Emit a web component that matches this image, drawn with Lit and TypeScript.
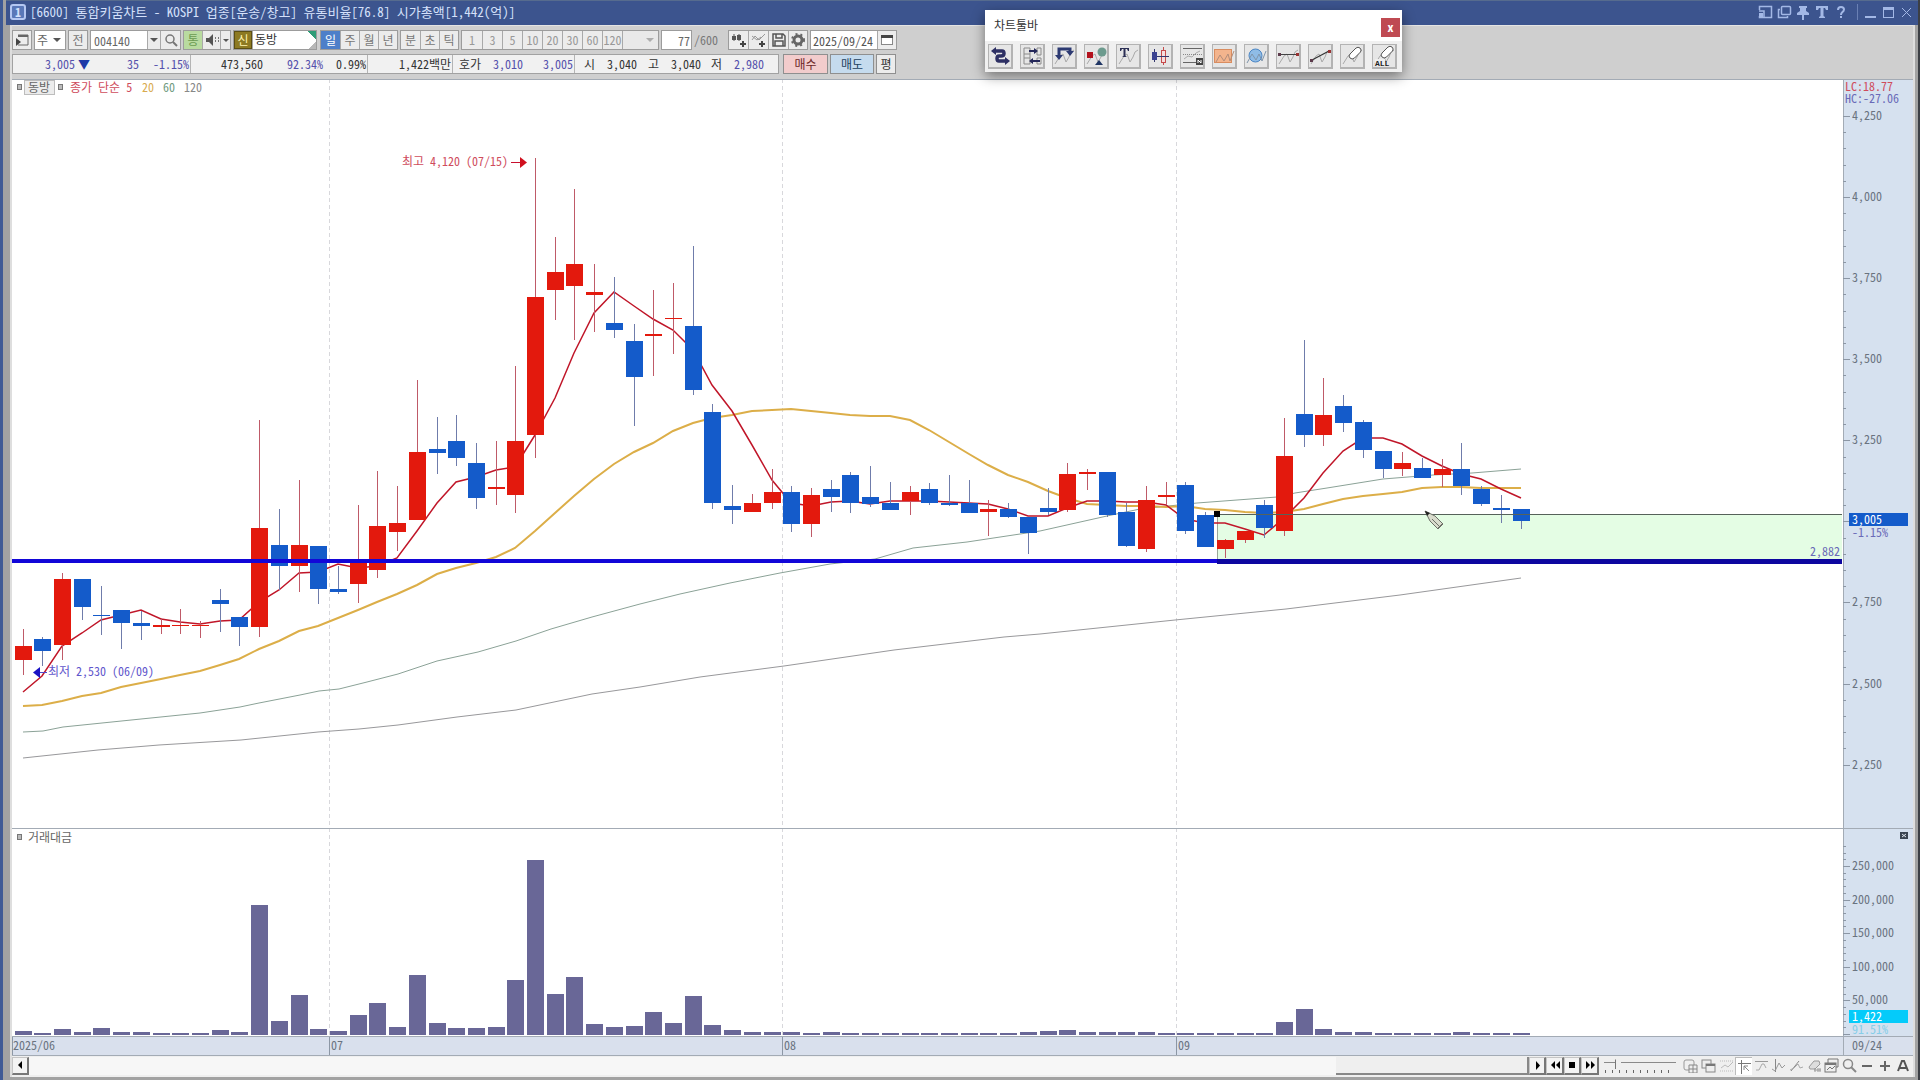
import { LitElement, html, svg, css, nothing } from "lit";
import { customElement, property } from "lit/decorators.js";

/* ---------- chart data (chart-space units, y grows downwards) ---------- */

type Candle = [kind: "u" | "d", top: number, bottom: number, high: number, low: number];

const X0 = 22.6;
const STEP = 19.71;
const BODY = 17;
const cx = (i: number) => Math.round(X0 + i * STEP);

const CANDLES: Candle[] = [
  ["u", 646, 660, 629, 675], ["d", 639, 651, 637, 666], ["u", 579, 645, 573, 660], ["d", 579, 607, 579, 620],
  ["d", 615, 615, 586, 635], ["d", 610, 623, 610, 649], ["d", 623, 626, 611, 640], ["u", 625, 627, 618, 634],
  ["u", 625, 625, 609, 634], ["u", 625, 625, 621, 638], ["d", 600, 604, 589, 632], ["d", 617, 627, 617, 646],
  ["u", 528, 627, 420, 637], ["d", 545, 566, 509, 590], ["u", 545, 566, 480, 592], ["d", 546, 589, 546, 604],
  ["d", 589, 592, 566, 594], ["u", 562, 584, 505, 603], ["u", 526, 570, 471, 578], ["u", 523, 532, 486, 551],
  ["u", 452, 520, 380, 520], ["d", 449, 453, 417, 474], ["d", 441, 458, 415, 466], ["d", 463, 498, 443, 509],
  ["u", 487, 489, 441, 505], ["u", 441, 495, 366, 513], ["u", 297, 435, 158, 458], ["u", 272, 290, 237, 320],
  ["u", 264, 286, 189, 340], ["u", 292, 295, 264, 332], ["d", 323, 330, 277, 338], ["d", 341, 377, 324, 426],
  ["u", 334, 336, 290, 376], ["u", 318, 318, 283, 354], ["d", 326, 390, 246, 395], ["d", 412, 503, 404, 509],
  ["d", 506, 510, 485, 524], ["u", 503, 512, 494, 512], ["u", 492, 503, 469, 509], ["d", 492, 524, 486, 532],
  ["u", 495, 524, 488, 537], ["d", 489, 497, 480, 512], ["d", 475, 503, 472, 513], ["d", 497, 504, 466, 507],
  ["d", 503, 510, 482, 510], ["u", 492, 501, 486, 515], ["d", 489, 503, 483, 505], ["d", 503, 505, 475, 506],
  ["d", 503, 513, 480, 513], ["u", 509, 512, 500, 536], ["d", 509, 517, 503, 518], ["d", 517, 533, 517, 554],
  ["d", 508, 512, 488, 515], ["u", 474, 510, 463, 512], ["u", 472, 474, 469, 490], ["d", 472, 515, 472, 517],
  ["d", 512, 546, 503, 547], ["u", 500, 549, 486, 552], ["u", 495, 497, 482, 505], ["d", 485, 531, 482, 534],
  ["d", 515, 547, 512, 547], ["u", 540, 549, 539, 558], ["u", 531, 540, 531, 543], ["d", 505, 528, 500, 538],
  ["u", 456, 531, 418, 536], ["d", 414, 435, 340, 447], ["u", 415, 435, 378, 446], ["d", 406, 423, 395, 432],
  ["d", 422, 450, 420, 458], ["d", 451, 469, 451, 478], ["u", 463, 469, 452, 476], ["d", 468, 478, 458, 478],
  ["u", 469, 475, 459, 487], ["d", 469, 486, 443, 495], ["d", 489, 504, 486, 506], ["d", 508, 510, 495, 523],
  ["d", 509, 521, 509, 529],
];

const MA5 = [
  692, 676, 646, 633, 620, 615, 610, 619, 622, 624, 621, 620, 602, 590, 573, 572, 564, 568, 566, 558, 531, 503, 482,
  477, 470, 467, 435, 398, 353, 313, 292, 306, 319, 330, 350, 385, 411, 445, 480, 503, 506, 502, 501, 504, 501, 501,
  501, 502, 503, 504, 509, 516, 516, 508, 501, 501, 502, 502, 505, 519, 523, 523, 529, 535, 518, 498, 473, 451, 438,
  438, 444, 456, 466, 474, 479, 489, 498,
];

const MA20 = [
  706, 705, 701, 696, 693, 687, 683, 679, 675, 671, 665, 659, 649, 641, 631, 626, 618, 610, 602, 594, 585, 574, 568,
  563, 557, 548, 531, 513, 496, 479, 464, 452, 443, 431, 423, 418, 415, 411, 410, 409, 411, 413, 415, 416, 416, 420,
  430, 442, 454, 465, 475, 482, 491, 498, 504, 505, 506, 506, 507, 506, 509, 510, 512, 513, 512, 509, 504, 499, 496,
  494, 492, 488, 487, 487, 488, 488, 488,
];

const MA60: [number, number][] = [
  [23, 732], [43, 731], [63, 727], [102, 723], [141, 719], [200, 713], [240, 707], [259, 703], [300, 695], [319, 691],
  [339, 689], [367, 682], [398, 674], [437, 661], [478, 652], [516, 641], [551, 629], [592, 617], [640, 604],
  [680, 594], [730, 583], [780, 573], [830, 564], [875, 559], [913, 548], [967, 542], [1040, 531], [1107, 516],
  [1140, 509], [1197, 503], [1277, 497], [1295, 493], [1327, 488], [1383, 479], [1433, 475], [1472, 473], [1521, 469],
];

const MA120: [number, number][] = [
  [23, 758], [98, 750], [159, 745], [241, 740], [318, 732], [359, 729], [398, 725], [457, 717], [516, 710], [592, 694],
  [640, 687], [700, 677], [784, 666], [894, 650], [1004, 637], [1040, 634], [1175, 620], [1286, 609], [1400, 595],
  [1521, 578],
];

const TRADES = [
  1031, 1033, 1029, 1032, 1028, 1032, 1032, 1033, 1033, 1033, 1030, 1032, 905, 1021, 995, 1029, 1031, 1015, 1003, 1027,
  975, 1023, 1028, 1028, 1027, 980, 860, 994, 977, 1024, 1027, 1026, 1012, 1023, 996, 1025, 1030, 1032, 1032, 1032,
  1033, 1032, 1033, 1033, 1033, 1033, 1033, 1033, 1033, 1033, 1033, 1032, 1031, 1030, 1032, 1032, 1032, 1032, 1033,
  1033, 1033, 1033, 1033, 1033, 1022, 1009, 1029, 1032, 1032, 1033, 1033, 1033, 1033, 1032, 1033, 1033, 1033,
];

const MONTHS: [number, string][] = [[11, "2025/06"], [329, "07"], [782, "08"], [1176, "09"]];
const AXIS_X = 1843;
const priceY = (p: number) => Math.round(116 + (4250 - p) * 0.3243);
const line = (pts: [number, number][]) => pts.map((p) => p.join(",")).join(" ");
const series = (ys: number[]): [number, number][] => ys.map((y, i) => [cx(i), y]);

/* ---------- icons ---------- */

const ghost = svg`<path d="M3 20 L8 12 L11 10 L14 18 L17 13 L19 8 L22 6" fill="none" stroke="#a9a9a9"/>`;

const TOOLS: [string, unknown][] = [
  ["차트 전환", svg`<path d="M7 7 H14 Q16 7 16 9.500 Q16 12 13 12 H11 Q9 12 9 14.500 Q9 17 11 17 H18" fill="none" stroke="#2d2f63" stroke-width="3.500"/><path d="M8 3 L3 7 L8 11z M17 13 L22 17 L17 21z" fill="#2d2f63"/>`],
  ["비교", svg`<path d="M4 4 H10 V20 H4z M4 10 H10 M4 14 H10 M17 4 H21 V11 H17z M17 14 H21 V20 H17z" fill="none" stroke="#8b8b8b"/><path d="M9 7 H16 M20 17 H12" stroke="#25285a" stroke-width="2"/><path d="M14 4 L18 7 L14 10z M13 14 L9 17 L13 20z" fill="#25285a"/>`],
  ["되돌리기", svg`${ghost}<path d="M7 13 V5 H18 V8" fill="none" stroke="#2d3a72" stroke-width="3"/><path d="M3 11 H11 L7 16z M14 7 H22 L18 12z" fill="#2d3a72"/>`],
  ["도형", svg`${ghost}<rect x="3" y="8" width="6" height="6" fill="#b3121d"/><circle cx="18" cy="8" r="4.500" fill="#6d9b8e"/><path d="M11 21 L15 16 L19 21z" fill="#1f3564"/>`],
  ["문자", svg`${ghost}<path d="M4 4 H13 V7 H12 L11 5 H9.500 V12 L11 13 H6 L7.500 12 V5 H6 L5 7 H4z" fill="#2b2f55"/>`],
  ["봉", svg`<path d="M6.500 5 V18 M15.500 3 V21" stroke="#33386e"/><path d="M15.500 3 V21" stroke="#c54b4b"/><rect x="4" y="8" width="5" height="8" fill="#3a4290"/><rect x="13.500" y="6.500" width="4" height="12" fill="#f6dede" stroke="#c54b4b"/><path d="M9 12.500 H21" stroke="#33386e"/>`],
  ["수평선", svg`<path d="M3 4.500 H22 M3 18.500 H16" stroke="#666"/><path d="M3 10.500 H22" stroke="#888" stroke-dasharray="1 1"/><path d="M4 15 L8 12 L12 13 L16 9 L20 7" fill="none" stroke="#aaa"/><rect x="16" y="14" width="7" height="7" fill="#444"/><path d="M18 19 V16 L21 19 V16" fill="none" stroke="#fff"/>`],
  ["사각형", svg`<rect x="2.500" y="5.500" width="17" height="13" fill="#f3b48d" stroke="#d98d60"/><path d="M4 18 L8 11 L12 17 L16 10 L18 17 L22 7" fill="none" stroke="#b18d7b"/>`],
  ["원", svg`<circle cx="11.500" cy="11.500" r="6.500" fill="#8fbce6" stroke="#4c86c4"/><path d="M3 19 L8 10 L12 16 L15 10 L18 17 L22 7" fill="none" stroke="#7f95ab"/>`],
  ["수평 추세선", svg`${ghost}<path d="M3 10.500 H22" stroke="#444"/><rect x="2" y="9" width="3" height="3" fill="#5d3b4b"/><rect x="20" y="9" width="3" height="3" fill="#933"/>`],
  ["추세선", svg`${ghost}<path d="M4 16 L21 7" stroke="#333" stroke-width="1.200"/><rect x="2" y="15" width="3" height="3" fill="#5d3b4b"/><rect x="20" y="6" width="3" height="3" fill="#933"/>`],
  ["지우기", svg`${ghost}<path d="M10 10 L16 4 Q18 2.500 20 4 Q22 6 20.500 8 L14.500 14 Q12 16 10 14 Q8 12 10 10z" fill="#fff" stroke="#555"/>`],
  ["모두 지우기", svg`${ghost}<path d="M10 9 L16 3 Q18 1.500 20 3 Q22 5 20.500 7 L14.500 13 Q12 15 10 13 Q8 11 10 9z" fill="#fff" stroke="#555"/><rect x="3" y="15" width="10" height="7" fill="#eee"/><text x="3" y="22" font-size="8" font-weight="bold" fill="#222" font-family="Liberation Mono, monospace">ALL</text>`],
];

const FOOT_ICONS: [string, unknown][] = [
  ["창 추가", svg`<rect x="1" y="2" width="10" height="10" rx="2" fill="none" stroke="#999"/><path d="M6 7 H14 V15 H6z M6 11 H14 M10 7 V15" fill="#eee" stroke="#888"/>`],
  ["창 겹치기", svg`<rect x="1" y="2" width="9" height="8" fill="#eee" stroke="#888"/><rect x="5" y="6" width="9" height="8" fill="#eee" stroke="#888"/><path d="M5 7 H14" stroke="#777" stroke-width="2"/>`],
  ["구간", svg`<path d="M1 3 H14 M1 13 H14" stroke="#bbb" stroke-dasharray="1 1"/><path d="M2 10 L6 7 L9 9 L14 4" fill="none" stroke="#bbb"/>`],
  ["커서", svg`<path d="M1 4.500 H14 M4.500 1 V15" stroke="#777"/><path d="M7 7 L12 12 M7 7 V11 M7 7 H11" stroke="#888"/>`],
  ["수평선", svg`<path d="M1 3.500 H14" stroke="#999"/><path d="M2 12 L5 12 L8 6 L10 6 L12 10" fill="none" stroke="#aaa"/>`],
  ["수직선", svg`<path d="M4.500 1 V14" stroke="#888"/><path d="M1 11 L4 13 L8 5 L11 10 L14 7" fill="none" stroke="#999"/>`],
  ["추세선", svg`<path d="M2 13 L10 3" stroke="#888"/><path d="M1 12 L5 10 L9 6 L11 10 L14 9" fill="none" stroke="#aaa"/>`],
  ["모두 지우기", svg`<path d="M2 9 L7 3 H12 L13 6 L8 11 H3z" fill="#ddd" stroke="#999"/><path d="M7 12 H14 M8 10 V14 M11 10 V14 M13 10 V14" stroke="#999"/>`],
  ["차트 겹치기", svg`<path d="M4 5 V1 H14 V9 H12" fill="none" stroke="#777"/><rect x="1" y="5" width="11" height="9" fill="#eee" stroke="#777"/><path d="M1 6 H12" stroke="#777" stroke-width="2"/><path d="M3 12 L6 9 L8 11 L11 8" fill="none" stroke="#777"/>`],
  ["확대경", svg`<circle cx="6" cy="6" r="4.500" fill="none" stroke="#888" stroke-width="1.500"/><path d="M9 9 L14 14" stroke="#888" stroke-width="2"/>`],
  ["축소", svg`<path d="M3 8 H13" stroke="#666" stroke-width="2"/>`],
  ["확대", svg`<path d="M3 8 H13 M8 3 V13" stroke="#666" stroke-width="2"/>`],
  ["자동", svg`<path d="M3 13 L7 3 H9 L13 13 M5 10 H11" fill="none" stroke="#555" stroke-width="2"/>`],
];

const TITLE_ICONS: [string, unknown][] = [
  ["창 분리", svg`<path d="M1.500 5 V1.500 H13.500 V12.500 H1.500 V11" fill="none" stroke="currentColor" stroke-width="1.500"/><path d="M1 6 H6 V12" fill="none" stroke="currentColor" stroke-width="1.500"/><rect x="1" y="8" width="4" height="5" fill="currentColor"/>`],
  ["창 복제", svg`<rect x="4.500" y="1.500" width="9" height="8" rx="1" fill="none" stroke="currentColor" stroke-width="1.500"/><path d="M3 4.500 H1.500 V12.500 H10.500 V11" fill="none" stroke="currentColor" stroke-width="1.500"/>`],
  ["고정", svg`<path d="M3 1 H11 V3 H10 V6 L13 8 V10 H1 V8 L4 6 V3 H3z M6 10 H8 V15 H6z" fill="currentColor"/>`],
  ["글자", svg`<path d="M1 1 H13 V5 H11 L10 3 H8.500 V11 L10 12 V13 H4 V12 L5.500 11 V3 H4 L3 5 H1z" fill="currentColor"/>`],
  ["도움말", svg`<path d="M4 5 Q4 2 7 2 Q10 2 10 4.500 Q10 6 8 7.500 Q7 8.500 7 10" fill="none" stroke="currentColor" stroke-width="2"/><rect x="6" y="11" width="2" height="2" fill="currentColor"/>`],
];
const WINDOW_ICONS: [string, unknown][] = [
  ["최소화", svg`<path d="M2 12 H13" stroke="currentColor" stroke-width="2"/>`],
  ["최대화", svg`<rect x="2.500" y="3.500" width="10" height="9" fill="none" stroke="currentColor"/><path d="M2 3.500 H13" stroke="currentColor" stroke-width="3"/>`],
  ["닫기", svg`<path d="M3 3 L12 12 M12 3 L3 12" stroke="currentColor"/>`],
];

const icon = (body: unknown, box = 16) =>
  html`<svg class="icon" width=${box} height=${box} viewBox="0 0 ${box} ${box}" aria-hidden="true">${body}</svg>`;
const arrow = svg`<path d="M4 6 H12 L8 10z" fill="#555"/>`;

const shared = css`
  :host { font-family: "Noto Sans Mono CJK KR", "Noto Sans CJK KR", "Liberation Sans", sans-serif; font-size: 12px; line-height: 16px; color: #333; }
  * { box-sizing: border-box; }
  button, input, select { font: inherit; color: inherit; margin: 0; padding: 0; border-radius: 0; }
  button { display: flex; align-items: center; justify-content: center; }
  .icon { display: block; flex: none; }
`;

/* ---------- title bar ---------- */

@customElement("title-bar")
class TitleBar extends LitElement {
  static styles = [shared, css`
    :host { display: block; }
    .bar { display: flex; align-items: center; height: 25px; padding: 0 4px 2px 4px; background: #3c548e; border-top: 1px solid #566b8e; color: #d5e1fb; }
    .badge { width: 16px; height: 16px; margin-right: 4px; border: 2px solid #b5c8f2; border-radius: 3px; background: #5a78b8; font-weight: 700; line-height: 11px; text-align: center; }
    .title { flex: 1; margin: 0; font-size: 13px; font-weight: 500; white-space: pre; }
    .group { display: flex; gap: 4px; color: #a3b8e6; }
    .group + .group { gap: 3px; margin-left: 8px; padding-left: 5px; border-left: 1px solid #6a80b4; }
    .group button { width: 15px; height: 16px; border: 0; background: none; }
  `];
  render() {
    const group = (items: [string, unknown][]) => html`<div class="group">
      ${items.map(([label, body]) => html`<button aria-label=${label}>${icon(body, 15)}</button>`)}
    </div>`;
    return html`<header class="bar">
      <span class="badge">1</span>
      <h1 class="title">[6600] 통합키움차트 - KOSPI 업종[운송/창고] 유통비율[76.8] 시가총액[1,442(억)]</h1>
      ${group(TITLE_ICONS)}${group(WINDOW_ICONS)}
    </header>`;
  }
}

/* ---------- toolbars ---------- */

@customElement("chart-toolbar")
class ChartToolbar extends LitElement {
  static styles = [shared, css`
    :host { display: block; }
    .row { display: flex; align-items: center; height: 20px; }
    .group { display: flex; height: 20px; margin-right: 2px; border: 1px solid #9c9c9c; background: #fff; }
    .group > * { height: 18px; border: 0; background: #ececec; }
    .group > * + * { border-left: 1px solid #a9a9a9; }
    .group input, .group .name { padding: 0 3px; background: #fff; }
    .sq { width: 18px; overflow: hidden; }
    .sq.mid { width: 19px; }
    .sq.big { width: 20px; }
    .tf { width: 19px; padding: 0 1px; overflow: hidden; }
    .tf.num { width: 20px; }
    .arrow { width: 13px; overflow: hidden; }
    .arrow.slim { width: 10px; }
    .pick { position: relative; width: 30px; }
    .pick select { width: 100%; height: 18px; padding: 0 2px; border: 0; background: #fff; appearance: none; color: #666; }
    .pick .icon { position: absolute; right: 0; top: 1px; pointer-events: none; }
    .pick.wide { width: 36px; }
    .pick.wide select { background: #e9e9e9; }
    .pick.wide .icon { opacity: 0.4; }
    .muted { color: #777; }
    .dim { color: #999; }
    .code { width: 56px; color: #666; }
    .group .green { background: #b9dba0; color: #6b9a51; }
    .group .olive { background: #8d7a22; color: #fff3b0; border: 1px solid #5c4f14; }
    .group .name { width: 64px; padding: 0 2px; background: linear-gradient(225deg, #2e9c77 6px, transparent 6px), linear-gradient(315deg, #b8b8b8 5px, #fff 5px); }
    .group .on { background: #4d7fc9; color: #fff; }
    .gap { margin-right: 3px; }
    .group .count { width: 29px; padding: 0 1px; text-align: right; color: #666; }
    .total { margin: 0 10px 0 0; color: #777; }
    .group .date { width: 66px; padding: 0 2px; color: #555; }
    .quotes { margin-top: 4px; }
    .quote { display: flex; align-items: center; height: 20px; margin: 0 4px 0 0; border: 1px solid #a2a2a2; background: #f1f1f1; white-space: nowrap; }
    .cell { height: 18px; line-height: 18px; text-align: right; }
    .cell.end { border-right: 1px solid #b4b4b4; padding-right: 1px; }
    .down { color: #5450ac; }
    .tri { color: #1d3aa8; }
    .trade { height: 20px; margin-right: 2px; border: 1px solid #8f8f8f; background: #ececec; }
    .buy { width: 45px; background: #f2cccc; color: #6b2626; }
    .sell { width: 44px; background: #c5dbee; color: #22415f; }
    .avg { width: 20px; }
  `];
  render() {
    const c = (text: string, width: number, cls = "") => html`<span class="cell ${cls}" style="width:${width}px">${text}</span>`;
    return html`
      <div class="row">
        <div class="group"><button class="sq" aria-label="메뉴">${icon(svg`<path d="M4 3 H14 V13 H4" fill="none" stroke="#666"/><path d="M4 4 H14" stroke="#666" stroke-width="2"/><path d="M2 6 L7 10 L2 14z" fill="#444"/>`)}</button></div>
        <div class="group"><label class="pick"><select aria-label="종목 구분"><option>주</option></select>${icon(arrow)}</label></div>
        <div class="group"><button class="sq muted">전</button></div>
        <div class="group">
          <input class="code" aria-label="종목 코드" .value=${"004140"} />
          <button class="arrow" aria-label="코드 목록">${icon(arrow)}</button>
          <button class="sq big" aria-label="종목 검색">${icon(svg`<circle cx="7" cy="7" r="4" fill="none" stroke="#777" stroke-width="1.500"/><path d="M10 10 L14 14" stroke="#777" stroke-width="2"/>`)}</button>
        </div>
        <div class="group">
          <button class="sq green">통</button>
          <button class="sq" aria-label="소리">${icon(svg`<path d="M2 6 H5 L9 2 V14 L5 10 H2z" fill="#555"/><path d="M11.500 5 V11 M14.500 5 V11" stroke="#777" stroke-dasharray="2 1"/>`)}</button>
          <button class="arrow slim" aria-label="소리 설정">${icon(svg`<path d="M5 7 H11 L8 10z" fill="#555"/>`)}</button>
        </div>
        <div class="group gap"><button class="sq olive">신</button><span class="name">동방</span></div>
        <div class="group">${["일", "주", "월", "년"].map((t, i) => html`<button class="tf ${i ? "muted" : "on"}">${t}</button>`)}</div>
        <div class="group">${["분", "초", "틱"].map((t) => html`<button class="tf muted">${t}</button>`)}</div>
        <div class="group">
          ${["1", "3", "5", "10", "20", "30", "60", "120"].map((t) => html`<button class="tf num dim">${t}</button>`)}
          <label class="pick wide"><select aria-label="주기"><option></option></select>${icon(arrow)}</label>
        </div>
        <div class="group"><input class="count" aria-label="봉 개수" .value=${"77"} /></div>
        <span class="total">/600</span>
        <div class="group">
          <button class="sq mid" aria-label="봉 추가">${icon(svg`<path d="M3 2 V9 M8 2 V9" stroke="#555" stroke-width="1"/><path d="M1 4 H5 V8 H1z M6 3 H10 V8 H6z" fill="#555"/><path d="M9 12 H15 M12 9 V15" stroke="#444" stroke-width="2"/>`)}</button>
          <button class="sq big" aria-label="지표 추가">${icon(svg`<path d="M1 8 L4 4 L8 8 L14 2 M1 4 L6 8 L10 5" fill="none" stroke="#999"/><path d="M8 12 H14 M11 9 V15" stroke="#444" stroke-width="2"/>`)}</button>
          <button class="sq big" aria-label="저장">${icon(svg`<path d="M2 2 H12 L14 4 V14 H2z M5 2 V6 H11 V2 M4 14 V9 H12 V14" fill="none" stroke="#555" stroke-width="1.500"/>`)}</button>
          <button class="sq mid" aria-label="설정">${icon(svg`<circle cx="8" cy="8" r="4" fill="none" stroke="#666" stroke-width="3"/><circle cx="8" cy="8" r="6" fill="none" stroke="#666" stroke-width="2" stroke-dasharray="2 3"/>`)}</button>
        </div>
        <div class="group">
          <input class="date" aria-label="날짜" .value=${"2025/09/24"} />
          <button class="sq mid" aria-label="달력">${icon(svg`<rect x="2.500" y="3.500" width="11" height="9" fill="#fff" stroke="#888"/><path d="M2 4.500 H14" stroke="#444" stroke-width="3"/>`)}</button>
        </div>
      </div>
      <div class="row quotes">
        <p class="quote">
          ${c("3,005", 62, "down")}${c("▼", 15, "tri")}${c("35", 49, "down")}${c("-1.15%", 52, "down end")}
          ${c("473,560", 72)}${c("92.34%", 60, "down")}${c("0.99%", 45, "end")}${c("1,422백만", 85, "end")}
          ${c("호가", 28)}${c("3,010", 42, "down")}${c("3,005", 52, "down end")}${c("시", 20)}${c("3,040", 42)}
          ${c("고", 22)}${c("3,040", 42)}${c("저", 21)}${c("2,980", 42, "down")}${c("", 14)}
        </p>
        <button class="trade buy">매수</button><button class="trade sell">매도</button><button class="trade avg">평</button>
      </div>`;
  }
}

/* ---------- floating tool palette ---------- */

@customElement("tool-palette")
class ToolPalette extends LitElement {
  static styles = [shared, css`
    :host { display: block; }
    .box { background: #f0f0f0; box-shadow: 0 4px 12px rgba(0, 0, 0, 0.45); }
    .head { display: flex; align-items: center; justify-content: space-between; height: 31px; padding: 3px 2px 0 9px; background: #fff; }
    .head h2 { margin: 0 0 5px; font-family: "Noto Sans CJK KR", sans-serif; font-size: 12px; font-weight: 400; }
    .close { width: 19px; height: 19px; border: 0; background: #bf4a52; color: #fff; font-weight: 700; }
    .tools { display: flex; gap: 7px; padding: 3px 5px 3px 3px; }
    .tools button { width: 25px; height: 25px; border: 1px solid #b3b3b3; border-width: 1px 2px 2px 1px; background: #e6e6e6; }
  `];
  render() {
    return html`<section class="box" aria-label="차트툴바">
      <div class="head"><h2>차트툴바</h2><button class="close" aria-label="닫기">x</button></div>
      <div class="tools">${TOOLS.map(([label, body]) => html`<button aria-label=${label}>${icon(body, 24)}</button>`)}</div>
    </section>`;
  }
}

/* ---------- price / volume panels ---------- */

const chartStyles = css`
  :host { display: block; }
  .plot { display: block; width: 100%; height: auto; overflow: visible; background: #fff; }
  text { font-family: "Noto Sans Mono CJK KR", "Noto Sans CJK KR", sans-serif; font-size: 12px; fill: #6a7380; }
  .axis { fill: #d6e1ef; }
  .tick { stroke: #8c97a5; }
  .edge { stroke: #a3abb5; }
  .grid { stroke: #d8d8dc; stroke-dasharray: 4 3; }
  .u { fill: #e3190d; }
  .d { fill: #145bca; }
  .wu { stroke: #bf5a68; }
  .wd { stroke: #6f7cab; }
  .ma5 { fill: none; stroke: #c01629; stroke-width: 1.500; }
  .ma20 { fill: none; stroke: #dcae48; stroke-width: 2; }
  .ma60 { fill: none; stroke: #8ba297; }
  .ma120 { fill: none; stroke: #98989b; }
  .red { fill: #cf4c5c; }
  .blue { fill: #5f56cc; }
  .violet { fill: #6a6ab8; }
  .gold { fill: #d9ab50; }
  .sage { fill: #6f9a80; }
  .gray { fill: #888; }
  .white { fill: #fff; }
  .cyan { fill: #86cde8; }
  .legend { fill: #666; }
  .chip { fill: #ececec; stroke: #bdbdbd; }
  .bullet { fill: #bbb; stroke: #777; }
  .bar { fill: #696797; }
`;

@customElement("price-panel")
class PricePanel extends LitElement {
  static styles = [shared, chartStyles];
  render() {
    const ticks = [];
    for (let p = 2250; p <= 4250; p += 50) {
      const major = p % 250 === 0;
      const y = priceY(p);
      ticks.push(svg`<path class="tick" d="M${AXIS_X} ${y + 0.5} h${major ? 7 : 3}"/>
        ${major && p !== 3000 ? svg`<text x="1852" y=${y + 4}>${p.toLocaleString("en-US")}</text>` : nothing}`);
    }
    return html`<svg class="plot" viewBox="12 79 1901 749">
      <rect class="axis" x=${AXIS_X} y="79" width="70" height="749"/>
      ${MONTHS.slice(1).map(([x]) => svg`<path class="grid" d="M${x + 0.5} 79 V828"/>`)}
      <rect x="1217" y="515" width="625" height="46" fill="#e4fde4"/>
      <path d="M1217.500 515 V561" stroke="#9aa79a"/>
      <polyline class="ma120" points=${line(MA120)}/>
      <polyline class="ma60" points=${line(MA60)}/>
      <polyline class="ma20" points=${line(series(MA20))}/>
      <polyline class="ma5" points=${line(series(MA5))}/>
      ${CANDLES.map(([k, top, bottom, high, low], i) => svg`
        <path class="w${k}" d="M${cx(i) + 0.5} ${high} V${low}"/>
        <rect class=${k} x=${cx(i) - 8} y=${top} width=${BODY} height=${Math.max(1, bottom - top)}/>`)}
      <path d="M1217 514.500 H1842" stroke="#56625a"/>
      <rect x="12" y="559" width="1830" height="4" fill="#1206d8"/>
      <rect x="1217" y="559" width="625" height="5" fill="#0d069f"/>
      <rect x="1214" y="511" width="6" height="6" fill="#000"/>
      <path d="M1425 511 L1430 521 L1438 529 L1443 524 L1435 516z" fill="#d9dccd" stroke="#6d7068"/>
      <path d="M1425 511 L1427 516 L1430 513z" fill="#222"/><path d="M1432 519 L1439 526 M1437 529 L1443 523" stroke="#6d7068"/>
      <text class="violet" x="1840" y="556" text-anchor="end">2,882</text>
      <text class="red" x="402" y="166">최고 4,120 (07/15)</text>
      <path d="M511 162.500 H520" stroke="#c8102e"/><path d="M520 157 L527 162.500 L520 168z" fill="#d0101e"/>
      <text class="blue" x="48" y="676">최저 2,530 (06/09)</text>
      <path d="M40 672.500 H47" stroke="#5146c8"/><path d="M40 667 L33 672.500 L40 678z" fill="#1a12c4"/>
      <rect class="bullet" x="17.500" y="84.500" width="4" height="5"/>
      <rect class="chip" x="24.500" y="80.500" width="30" height="14"/>
      <text class="legend" x="28" y="92">동방</text>
      <rect class="bullet" x="58.500" y="84.500" width="4" height="5"/>
      <text class="red" x="70" y="92">종가 단순 5</text>
      <text class="gold" x="142" y="92">20</text>
      <text class="sage" x="163" y="92">60</text>
      <text class="gray" x="184" y="92">120</text>
      <path class="edge" d="M${AXIS_X}.500 79 V828 M12 79.500 H1913"/>
      ${ticks}
      <text class="red" x="1845" y="91">LC:18.77</text>
      <text class="violet" x="1845" y="103">HC:-27.06</text>
      <rect class="d" x="1849" y="513" width="59" height="13"/>
      <text class="white" x="1852" y="524">3,005</text>
      <text class="violet" x="1852" y="537">-1.15%</text>
    </svg>`;
  }
}

@customElement("volume-panel")
class VolumePanel extends LitElement {
  static styles = [shared, chartStyles];
  render() {
    const y = (v: number) => Math.round(1034 - v * 0.000672);
    const ticks = [];
    for (let v = 0; v <= 280000; v += 10000) {
      const major = v % 50000 === 0;
      ticks.push(svg`<path class="tick" d="M${AXIS_X} ${y(v) + 0.5} h${major ? 7 : 3}"/>
        ${major && v ? svg`<text x="1852" y=${y(v) + 4}>${v.toLocaleString("en-US")}</text>` : nothing}`);
    }
    return html`<svg class="plot" viewBox="12 828 1901 208">
      <rect class="axis" x=${AXIS_X} y="828" width="70" height="208"/>
      ${MONTHS.slice(1).map(([x]) => svg`<path class="grid" d="M${x + 0.5} 828 V1036"/>`)}
      ${TRADES.map((top, i) => svg`<rect class="bar" x=${cx(i) - 8} y=${top} width=${BODY} height=${1035 - top}/>`)}
      <rect class="bullet" x="17.500" y="834.500" width="4" height="5"/>
      <text class="legend" x="28" y="842">거래대금</text>
      <path class="edge" d="M12 828.500 H1913 M${AXIS_X}.500 828 V1036"/>
      ${ticks}
      <rect x="1900" y="832" width="8" height="7" fill="#3b4552"/><path d="M1902 834 L1906 837 M1906 834 L1902 837" stroke="#dfe6ee"/>
      <rect x="1849" y="1010" width="59" height="13" fill="#04cbfa"/>
      <text class="white" x="1852" y="1021">1,422</text>
      <text class="cyan" x="1852" y="1034">91.51%</text>
    </svg>`;
  }
}

@customElement("date-axis")
class DateAxis extends LitElement {
  static styles = [shared, chartStyles];
  render() {
    return html`<svg class="plot" viewBox="12 1036 1901 20">
      <rect x="12" y="1036" width="1901" height="20" fill="#d9e0ed"/>
      <path class="edge" d="M12 1036.500 H1913 M12 1055.500 H1913 M${AXIS_X}.500 1036 V1056"/>
      ${MONTHS.map(([x, label]) => svg`<path class="tick" d="M${Math.max(x, 12) + 0.5} 1037 V1055"/><text x=${x + 2} y="1050">${label}</text>`)}
      <text x="1852" y="1050">09/24</text>
    </svg>`;
  }
}

/* ---------- bottom control strip ---------- */

@customElement("chart-footer")
class ChartFooter extends LitElement {
  @property({ type: Number }) speed = 48;
  static styles = [shared, css`
    :host { display: block; }
    .strip { display: flex; align-items: center; height: 21px; padding: 0 2px 2px 0; background: #efefef; }
    .step { flex: none; width: 17px; height: 18px; border: 1px solid #c5c5c5; border-right: 2px solid #777; border-bottom: 2px solid #777; background: #f3f3f3; }
    .step.wide { width: 18px; }
    .track { flex: 1; display: flex; justify-content: flex-end; height: 18px; background: #f7f7f7; }
    .thumb { width: 193px; border-right: 2px solid #888; border-bottom: 2px solid #888; background: #efefef; }
    .range { flex: none; display: flex; flex-direction: column; width: 72px; margin: 0 6px 0 5px; }
    .range input { width: 72px; height: 12px; appearance: none; background: linear-gradient(#8a8a8a, #8a8a8a) 0 4px / 100% 1px no-repeat; }
    .range input::-webkit-slider-thumb { appearance: none; width: 6px; height: 10px; border-left: 1px solid #777; border-top: 1px solid #efefef; background: #efefef; }
    .marks { height: 3px; margin: 0 1px; background: repeating-linear-gradient(90deg, #666 0 1px, transparent 1px 7px); }
    .tools { flex: none; display: grid; grid-template-columns: repeat(13, 1fr); width: 229px; }
    .tools button { height: 18px; border: 0; background: none; overflow: hidden; }
    .tools .on { background: #fff; border: 1px solid #bbb; border-right: 0; border-bottom: 0; }
  `];
  render() {
    const step = (label: string, d: string, cls = "") =>
      html`<button class="step ${cls}" aria-label=${label}>${icon(svg`<path d=${d} fill="#000"/>`, 14)}</button>`;
    return html`<div class="strip">
      ${step("왼쪽으로", "M9 3 V11 L5 7z")}
      <div class="track"><div class="thumb"></div></div>
      ${step("오른쪽으로", "M6 3 V12 L10 7.500z")}
      ${step("뒤로", "M7 3 V11 L3 7z M12 3 V11 L8 7z", "wide")}
      ${step("정지", "M4 4 H10 V10 H4z")}
      ${step("앞으로", "M3 3 V11 L7 7z M8 3 V11 L12 7z", "wide")}
      <label class="range"><input type="range" aria-label="재생 속도" min="0" max="300" .value=${String(this.speed)} /><span class="marks"></span></label>
      <div class="tools">${FOOT_ICONS.map(([label, body], i) => html`<button class=${i === 3 ? "on" : ""} aria-label=${label}>${icon(body, 15)}</button>`)}</div>
    </div>`;
  }
}

/* ---------- window ---------- */

@customElement("app-root")
class AppRoot extends LitElement {
  static styles = [shared, css`
    :host { display: block; }
    .window { position: relative; padding-bottom: 3px; border-left: 3px solid #3f5a95; border-right: 2px solid #3c3f45; background: #a2a2a2; }
    .titlebar { margin-left: 3px; }
    .frame { margin: 0 3px 0 7px; border: solid #dedede; border-width: 0 2px 0 2px; background: #cfcfcf; }
    .bars { padding: 4px 1px 5px 0; border-top: 1px solid #e4e4e4; }
    .palette { position: absolute; left: 982px; top: 10px; }
  `];
  render() {
    return html`<main class="window">
      <title-bar class="titlebar"></title-bar>
      <div class="frame">
        <chart-toolbar class="bars"></chart-toolbar>
        <price-panel></price-panel>
        <volume-panel></volume-panel>
        <date-axis></date-axis>
        <chart-footer></chart-footer>
      </div>
      <tool-palette class="palette"></tool-palette>
    </main>`;
  }
}
